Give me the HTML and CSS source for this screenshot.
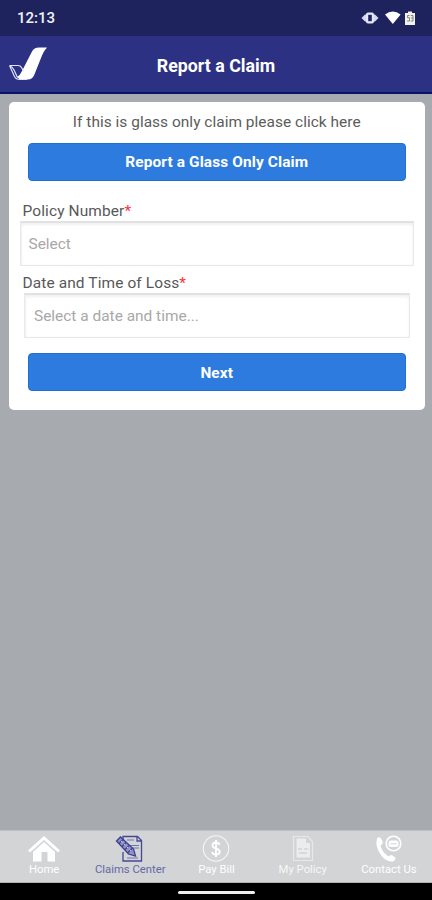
FILE: index.html
```
<!DOCTYPE html>
<html lang="en">
<head>
<meta charset="utf-8">
<title>Report a Claim</title>
<link rel="stylesheet" href="styles.css">
</head>
<body>
<div class="status">
  <span class="clock">12:13</span>
  <svg class="status-icons" width="56" height="18" viewBox="0 0 56 18">
    <path d="M.5 9 4 5.500h10L17.500 9 14 12.500H4z" fill="#d5daf1"/>
    <rect x="5" y="3.500" width="8" height="11" rx="2" fill="#e4e7f8"/>
    <rect x="7.200" y="5.800" width="3.600" height="6.400" fill="#1e235d"/>
    <path d="M24 5.500Q31.800-.5 39.600 5.500L31.800 15z" fill="#fff"/>
    <path d="M44 4h3V2.500h4V4h3v12H44z" fill="#f1f2e9"/>
    <path d="M48.500 6.500H46.500v2.200h2V12h-2.300M49.800 6.500H52V12h-2.200M50 9H52" fill="none" stroke="#777a76" stroke-width=".9"/>
  </svg>
</div>
<header class="header">
  <svg class="logo" width="40" height="36" viewBox="0 0 40 36">
    <path d="M39 1.500H31Q26 1.500 24 5.500L14 25Q12 29.500 9 31L12 33.500H20Q24 33.500 26 29.500L34 9.500Q36 4.500 39 1.500Z" fill="#fff"/>
    <path d="M1.500 19.500H10Q12.500 19.500 13.500 21.500L15.500 25M1.500 19.500 6.500 30.500Q8 33.500 12 33.500H19M1.500 19.500Q4.500 21 6 24L9.500 31.500" fill="none" stroke="#dfe3ff" stroke-width="1.200"/>
  </svg>
  <h1 class="title">Report a Claim</h1>
</header>
<main class="main">
  <section class="card">
    <p class="hint">If this is glass only claim please click here</p>
    <button class="btn btn-glass">Report a Glass Only Claim</button>
    <label class="label label-policy">Policy Number<span class="req">*</span></label>
    <div class="field field-policy">Select</div>
    <label class="label label-date">Date and Time of Loss<span class="req">*</span></label>
    <div class="field field-date">Select a date and time...</div>
    <button class="btn btn-next">Next</button>
  </section>
</main>
<nav class="tabs">
  <a class="tab"><svg width="34" height="28" viewBox="0 0 34 28"><path d="M17 1 33 15.500 31 17.500 17 5 3 17.500 1 15.500z" fill="#fff"/><path d="M17 7 28 17V26.500H20.500V17H14.500V26.500H6V17z" fill="#fff"/></svg><span>Home</span></a>
  <a class="tab active"><svg width="30" height="28" viewBox="0 0 30 28"><path d="M8 5V1.500H22.500L26.500 5.500V26H8V17M22 1.500V6H26.500" fill="none" stroke="#45479b" stroke-width="1.300"/><path d="M12 5h7M15 10.500h9M17 13h7M12 23h11" fill="none" stroke="#7274b0" stroke-width="1"/><path d="M1.500 6 5.500 2 18.500 14 20.500 21 13.500 19z" fill="#9092c2" stroke="#3d3f94" stroke-width="1.300"/><path d="M4 8.500 8 4.500M7 11.500 11 7.500M10 14.500 14 10.500M13 17.500 17 13.500" stroke="#3d3f94" stroke-width="1.200"/><path d="M6 6l10 10" stroke="#d2d4d5" stroke-width="1" stroke-dasharray="2 2"/></svg><span>Claims Center</span></a>
  <a class="tab"><svg width="30" height="28" viewBox="0 0 30 28"><circle cx="15" cy="13.500" r="12.700" fill="none" stroke="#f6f6f6" stroke-width="1.100"/><path d="M18.500 10Q18 7.500 15 7.500Q11.500 7.500 11.500 10.200Q11.500 12.500 15 13.500Q18.700 14.500 18.700 17Q18.700 19.500 15 19.500Q11.500 19.500 11.200 16.800M15 5V22" fill="none" stroke="#fff" stroke-width="1.900"/></svg><span>Pay Bill</span></a>
  <a class="tab faint"><svg width="28" height="28" viewBox="0 0 28 28"><path d="M4.500 1.500H19L23.500 6.500V25.500H4.500z" fill="none" stroke="#e7e8e9" stroke-width="1.200"/><path d="M7.500 3.500H17V8H21V22.500H7.500z" fill="#ebeced"/><path d="M9 14h4M15 14h4M10 18h8" stroke="#c5c8cb" stroke-width="1.200"/></svg><span>My Policy</span></a>
  <a class="tab"><svg width="30" height="28" viewBox="0 0 30 28"><path d="M3 3.500Q6 .5 8 5Q10 9 6.500 10.500Q8 17 14.500 21.500Q17 18.500 20 21.500Q23.500 24 19 26.500Q13 27 8 21.500Q.5 12 3 3.500Z" fill="#fff"/><circle cx="19.500" cy="8.500" r="7.300" fill="none" stroke="#fff" stroke-width="1.600"/><rect x="14.500" y="5.500" width="10" height="6.500" rx="2.500" fill="#fff"/><path d="M16.500 8.800h6" stroke="#d2d4d5" stroke-width="1"/></svg><span>Contact Us</span></a>
</nav>
<footer class="gesture"><div class="pill"></div></footer>
</body>
</html>
```
FILE: styles.css
```
* { box-sizing: border-box; }
body { margin: 0; height: 900px; display: flex; flex-direction: column; font-family: Roboto, "Liberation Sans", sans-serif; background: #a7abb0; overflow: hidden; }
.status { height: 36px; flex: none; background: #1e235d; display: flex; justify-content: space-between; align-items: center; padding: 0 15px 0 17px; color: #f2f3fa; }
.clock { font-size: 15px; font-weight: 500; letter-spacing: 0; }
.status-icons { display: block; }
.header { height: 58px; flex: none; background: #2c3184; border-bottom: 2px solid #08136e; display: grid; grid-template-columns: 60px 1fr 60px; align-items: center; }
.logo { margin-left: 8px; display: block; }
.title { margin: 3px 0 0; text-align: center; color: #fff; font-size: 17.800px; line-height: 24px; font-weight: 700; }
.main { flex: 1; padding: 8px 7.500px 0 9px; }
.card { height: 308px; background: #fff; border-radius: 5px; display: flex; flex-direction: column; }
.hint { margin: 9px 0 0; height: 31.500px; line-height: 22px; text-align: center; font-size: 15.450px; letter-spacing: .03px; color: #5c5c5c; }
.btn { margin: 0 19px; height: 38px; flex: none; border: 1px solid #1e70d4; border-radius: 4px; background: #2d7bdf; color: #fff; font: 700 15.400px Roboto, sans-serif; letter-spacing: .13px; padding: 1px 0 0; }
.label { margin-left: 13.500px; height: 20px; line-height: 20px; font-size: 15.450px; letter-spacing: .12px; color: #585858; flex: none; }
.label-policy { margin-top: 20.500px; }
.label-date { margin-top: 6.500px; }
.req { color: #ff3038; }
.field { height: 45px; flex: none; border: 1px solid #e9e9e9; border-top: 2px solid #e2e2e2; box-shadow: inset 0 2px 3px #f0f0f0, inset 1px 0 2px #f4f4f4; line-height: 42px; font-size: 15.450px; color: #a8a8a8; padding-left: 8px; }
.field-policy { margin: 0 10.500px; }
.field-date { margin: 0 15px; padding-left: 9px; }
.btn-next { margin-top: 15.500px; }
.tabs { height: 53px; flex: none; background: #d2d4d5; border-top: 1px solid #bfc2c4; border-bottom: 1px solid #b0b2b3; display: grid; grid-template-columns: repeat(5, 1fr); padding-left: 1px; }
.tab { display: flex; flex-direction: column; align-items: center; padding-top: 4px; color: #fff; font-size: 11.300px; line-height: 14px; white-space: nowrap; }
.tab svg { display: block; flex: none; }
.tab.active { color: #6668a8; }
.tab.faint { color: #f7f7f7; }
.gesture { height: 17px; flex: none; background: #000; display: flex; justify-content: center; padding-top: 8px; }
.pill { width: 77px; height: 3px; border-radius: 2px; background: #eee; }
```
